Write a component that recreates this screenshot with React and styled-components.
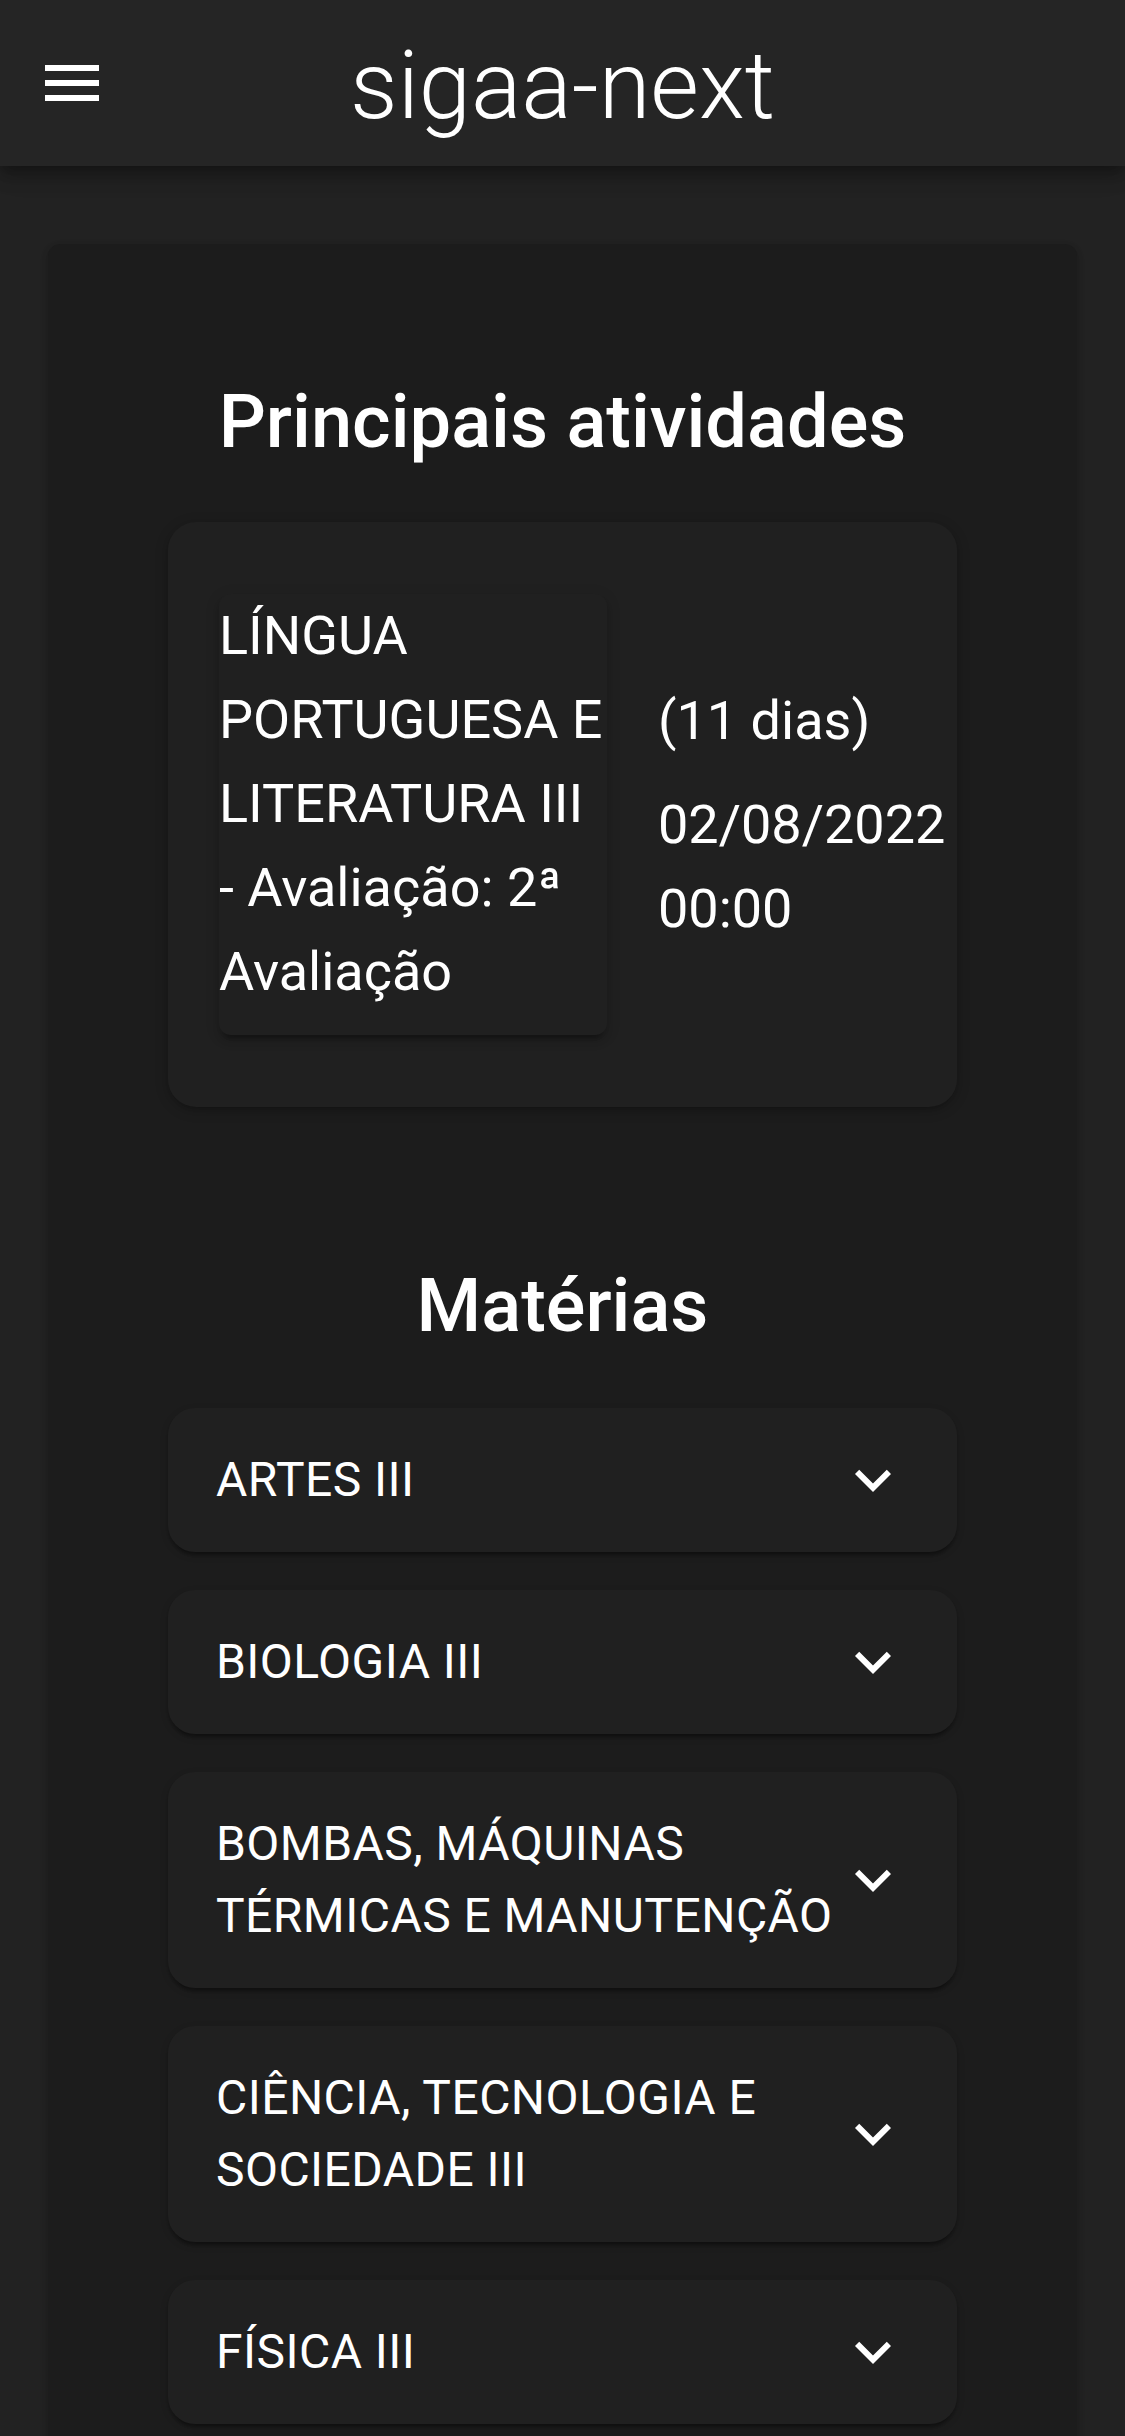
import React from "react";
import styled, { createGlobalStyle } from "styled-components";

const GlobalStyle = createGlobalStyle`
  html, body {
    margin: 0;
    padding: 0;
    background: #222222;
    color: #ffffff;
    font-family: Roboto, "Noto Sans", "Liberation Sans", sans-serif;
    -webkit-font-smoothing: antialiased;
  }
  * { box-sizing: border-box; }
`;

const Page = styled.div`
  min-height: 2436px;
  background: #222222;
`;

const Header = styled.header`
  position: relative;
  z-index: 2;
  height: 166px;
  background: #252525;
  display: grid;
  grid-template-columns: 1fr auto 1fr;
  align-items: center;
  box-shadow: 0 6px 12px -3px rgba(0, 0, 0, 0.25), 0 12px 15px 0 rgba(0, 0, 0, 0.16),
    0 3px 30px 0 rgba(0, 0, 0, 0.12);
`;

const MenuButton = styled.button`
  justify-self: start;
  width: 72px;
  height: 72px;
  margin-left: 36px;
  padding: 0;
  border: 0;
  background: transparent;
  display: flex;
  align-items: center;
  justify-content: center;
  svg {
    width: 72px;
    height: 72px;
    fill: #ffffff;
  }
`;

const Title = styled.h1`
  margin: 0;
  padding-top: 6px;
  font-size: 94px;
  font-weight: 300;
  line-height: normal;
  letter-spacing: 0;
  color: #ffffff;
`;

const Main = styled.main`
  padding: 78px 48px 0 48px;
`;

const Board = styled.section`
  background: #1c1c1c;
  border-radius: 12px;
  padding: 128px 120px 160px;
  box-shadow: 0 6px 3px -6px rgba(0, 0, 0, 0.2), 0 3px 6px 0 rgba(0, 0, 0, 0.14),
    0 3px 9px 0 rgba(0, 0, 0, 0.12);
`;

const SectionTitle = styled.h2`
  margin: ${(p) => p.$mt || 0}px 0 ${(p) => p.$mb || 0}px;
  font-size: 74px;
  font-weight: 500;
  line-height: 100px;
  text-align: center;
  color: #ffffff;
`;

const ActivityCard = styled.article`
  background: #202020;
  border-radius: 28px;
  padding: 72px 0 72px 51px;
  display: flex;
  align-items: center;
  gap: 51px;
  box-shadow: 0 6px 3px -6px rgba(0, 0, 0, 0.2), 0 3px 6px 0 rgba(0, 0, 0, 0.14),
    0 3px 15px 0 rgba(0, 0, 0, 0.12);
`;

const ActivityName = styled.div`
  flex: none;
  width: 388px;
  background: #202020;
  border-radius: 12px;
  padding-bottom: 21px;
  font-size: 54px;
  line-height: 84px;
  box-shadow: 0 9px 3px -6px rgba(0, 0, 0, 0.2), 0 6px 6px 0 rgba(0, 0, 0, 0.14),
    0 3px 15px 0 rgba(0, 0, 0, 0.12);
`;

const ActivityMeta = styled.div`
  flex: 1;
  min-width: 0;
  font-size: 54px;
  line-height: 84px;
`;

const MetaLine = styled.div`
  margin-bottom: ${(p) => (p.$gutter ? 20 : 0)}px;
`;

const SubjectList = styled.div`
  display: flex;
  flex-direction: column;
  gap: 38px;
`;

const Subject = styled.div`
  min-height: 144px;
  background: #202020;
  border-radius: 27px;
  padding: 0 48px;
  display: flex;
  align-items: center;
  box-shadow: 0 6px 3px -3px rgba(0, 0, 0, 0.2), 0 3px 3px 0 rgba(0, 0, 0, 0.14),
    0 3px 9px 0 rgba(0, 0, 0, 0.12);
`;

const SubjectName = styled.div`
  flex: 1;
  margin: 36px 0;
  font-size: 48px;
  line-height: 72px;
  letter-spacing: 0.45px;
  color: #ffffff;
`;

const Chevron = styled.svg`
  flex: none;
  width: 72px;
  height: 72px;
  fill: #ffffff;
`;

const subjects = [
  "ARTES III",
  "BIOLOGIA III",
  "BOMBAS, MÁQUINAS TÉRMICAS E MANUTENÇÃO",
  "CIÊNCIA, TECNOLOGIA E SOCIEDADE III",
  "FÍSICA III",
];

export default function App() {
  return (
    <Page>
      <GlobalStyle />
      <Header>
        <MenuButton aria-label="menu">
          <svg viewBox="0 0 24 24">
            <path d="M3 18h18v-2H3v2zm0-5h18v-2H3v2zm0-7v2h18V6H3z" />
          </svg>
        </MenuButton>
        <Title>sigaa-next</Title>
        <span />
      </Header>
      <Main>
        <Board>
          <SectionTitle $mb={50}>Principais atividades</SectionTitle>
          <ActivityCard>
            <ActivityName>
              LÍNGUA PORTUGUESA E LITERATURA III - Avaliação: 2ª Avaliação
            </ActivityName>
            <ActivityMeta>
              <MetaLine $gutter>(11 dias)</MetaLine>
              <MetaLine>02/08/2022 00:00</MetaLine>
            </ActivityMeta>
          </ActivityCard>
          <SectionTitle $mt={149} $mb={52}>
            Matérias
          </SectionTitle>
          <SubjectList>
            {subjects.map((s) => (
              <Subject key={s}>
                <SubjectName>{s}</SubjectName>
                <Chevron viewBox="0 0 24 24">
                  <path d="M16.59 8.59 12 13.17 7.41 8.59 6 10l6 6 6-6z" />
                </Chevron>
              </Subject>
            ))}
          </SubjectList>
        </Board>
      </Main>
    </Page>
  );
}
